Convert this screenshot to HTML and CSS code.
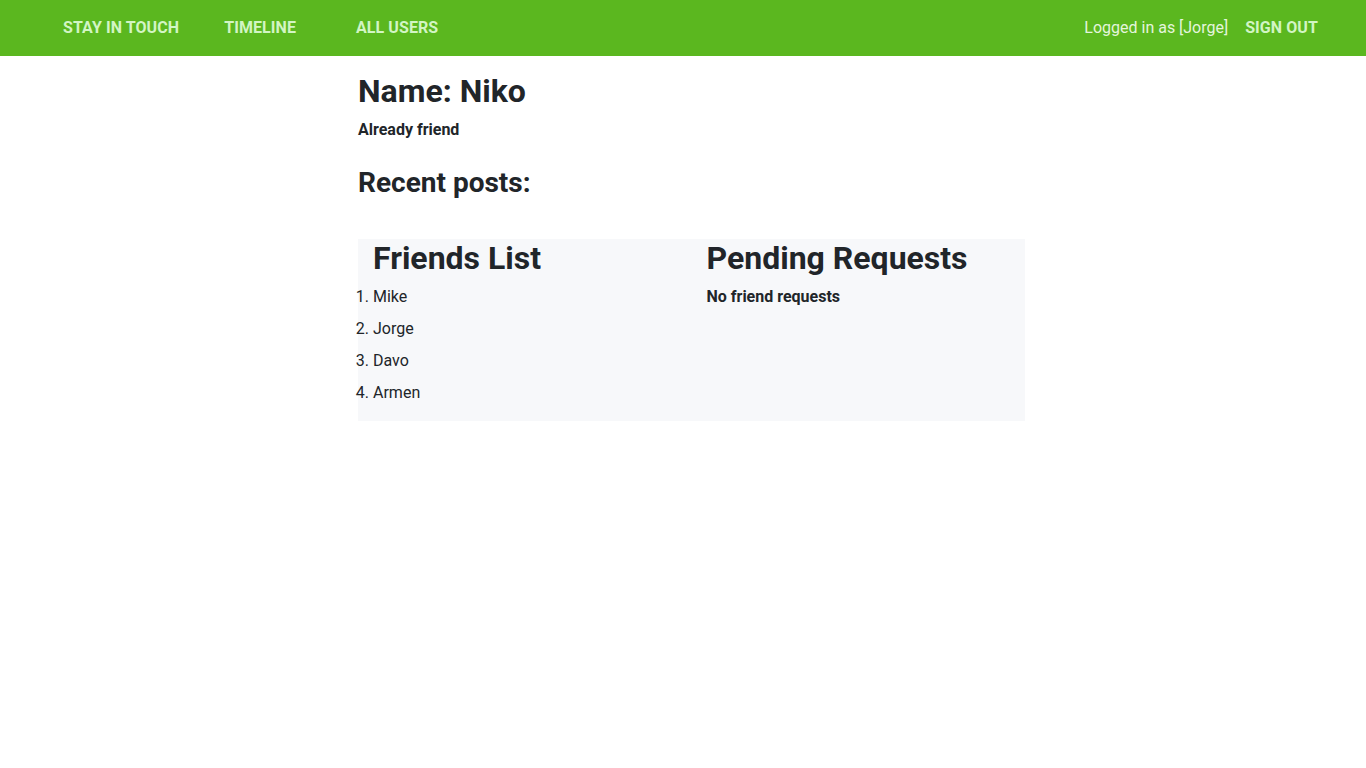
FILE: index.html
```html
<!DOCTYPE html>
<html lang="en">
<head>
<meta charset="utf-8">
<title>Stay in touch</title>
<link rel="stylesheet" href="styles.css">
</head>
<body>
<nav class="navbar">
  <div class="nav-left">
    <a class="nav-link brand" href="#">STAY IN TOUCH</a>
    <a class="nav-link timeline" href="#">TIMELINE</a>
    <a class="nav-link" href="#">ALL USERS</a>
  </div>
  <div class="nav-right">
    <span class="logged">Logged in as [Jorge]</span>
    <a class="nav-link" href="#">SIGN OUT</a>
  </div>
</nav>
<main class="content">
  <h2 class="name">Name: Niko</h2>
  <p class="status">Already friend</p>
  <h3 class="recent">Recent posts:</h3>
  <section class="friends-box">
    <div class="col">
      <h2 class="col-title">Friends List</h2>
      <ol class="friends">
        <li>Mike</li>
        <li>Jorge</li>
        <li>Davo</li>
        <li>Armen</li>
      </ol>
    </div>
    <div class="col">
      <h2 class="col-title">Pending Requests</h2>
      <p class="status">No friend requests</p>
    </div>
  </section>
</main>
</body>
</html>
```

FILE: styles.css
```css
* { box-sizing: border-box; }
html, body { margin: 0; padding: 0; }
body {
  font-family: Roboto, "Liberation Sans", sans-serif;
  font-size: 16px;
  line-height: 1.5;
  color: #212529;
  background: #fff;
}
.navbar {
  height: 56px;
  background: #5bb71f;
  display: flex;
  align-items: center;
  justify-content: space-between;
  padding: 0 48px 0 63px;
}
.nav-left, .nav-right { display: flex; align-items: center; }
.nav-link {
  color: #d2f5c4;
  font-weight: 700;
  text-decoration: none;
  font-size: 16px;
  letter-spacing: 0.08px;
}
.brand { margin-right: 45px; }
.timeline { margin-right: 60px; }
.logged { color: #e4f5dc; margin-right: 17px; }
.content {
  margin-left: 358px;
  width: 667px;
  padding-top: 16px;
}
h2, h3 { margin: 0; font-weight: 700; line-height: 1.2; }
.name { font-size: 32px; margin-bottom: 8px; }
.status { margin: 0; font-weight: 700; }
.recent { font-size: 28px; margin-top: 24px; margin-bottom: 39px; }
.friends-box {
  display: grid;
  grid-template-columns: 1fr 1fr;
  background: #f7f8fa;
  padding-bottom: 8px;
}
.col { padding: 0 15px; }
.col-title { font-size: 32px; margin-bottom: 8px; }
.friends { margin: 0; padding: 0; }
.friends li { margin-bottom: 8px; }
```
